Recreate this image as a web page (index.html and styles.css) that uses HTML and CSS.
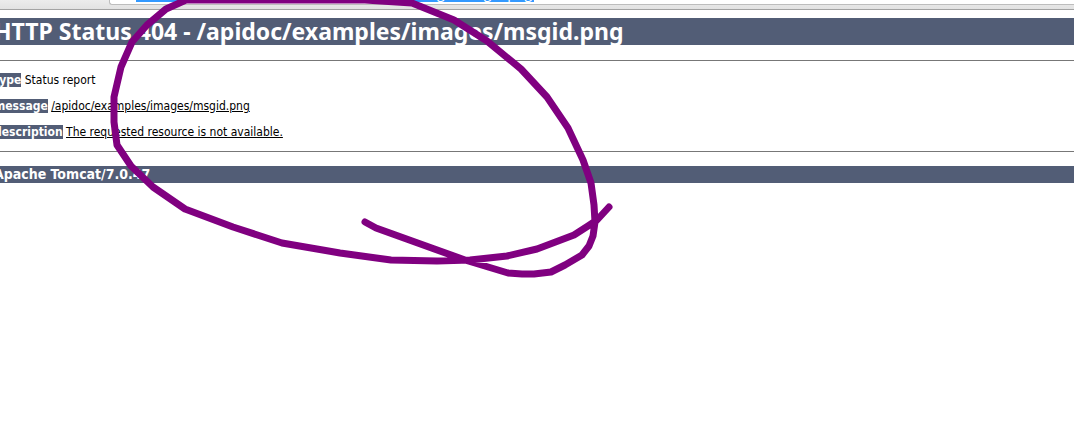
FILE: index.html
```html
<!DOCTYPE html>
<html lang="en">
<head>
<meta charset="utf-8">
<title>HTTP Status 404</title>
<link rel="stylesheet" href="styles.css">
</head>
<body>
<div class="toolbar">
  <div class="address">
    <input class="url" type="text" aria-label="Address" value="localhost:8080/apidoc/examples/images/msgid.png">
  </div>
</div>
<main class="report">
  <h1 class="title">HTTP Status 404 - /apidoc/examples/images/msgid.png</h1>
  <hr class="rule">
  <p class="row"><b class="label">type</b> Status report</p>
  <p class="row"><b class="label">message</b> <u>/apidoc/examples/images/msgid.png</u></p>
  <p class="row"><b class="label">description</b> <u>The requested resource is not available.</u></p>
  <hr class="rule">
  <h3 class="server">Apache Tomcat/7.0.47</h3>
</main>
<svg class="scribble" width="620" height="285" viewBox="0 0 620 285" aria-hidden="true">
  <path d="M365 222L376 228L465 260L508 273L522 274L534 274L551 272L565 265L582 255L589 246L593 236L595 222L594 205L591 183L583 160L568 128L547 97L521 69L487 41L454 20L412 3L365 0L186 0L166 9L147 25L132 42L121 67L114 97L114 122L117 145L131 166L153 187L185 209L233 227L282 243L340 253L391 260L437 261L470 260L507 256L537 249L574 235L588 226L597 220L609 207"/>
</svg>
</body>
</html>
```
FILE: styles.css
```css
* {
  box-sizing: border-box;
}

body {
  margin: 0;
  background: #fff;
  color: #000;
  font-family: Tahoma, "DejaVu Sans Condensed", "DejaVu Sans", sans-serif;
  overflow-x: hidden;
}

.toolbar {
  height: 10px;
  padding-left: 109px;
  background: linear-gradient(#ececec, #e2e2e2);
  border-bottom: 1px solid #a3a3a3;
}

.address {
  display: flex;
  align-items: flex-end;
  height: 5px;
  padding: 0 0 2px 26px;
  overflow: hidden;
  background: #fff;
  border: solid #bdbdbd;
  border-width: 0 0 1px 1px;
  border-radius: 0 0 0 3px;
}

.url {
  flex: none;
  width: 398px;
  height: 18px;
  padding: 0 2px;
  border: 0;
  background: #3399ff;
  color: #fff;
  font: 14px/18px "Open Sans", sans-serif;
  text-align: right;
}

.report {
  margin-top: 8px;
  margin-left: -6px;
}

.title,
.server,
.label {
  background: #525d76;
  color: #fff;
  font-weight: bold;
}

.title {
  margin: 0 0 15px;
  font-family: Tahoma, "Noto Sans", sans-serif;
  font-size: 23px;
  line-height: 27px;
  white-space: nowrap;
}

.rule {
  height: 1px;
  margin: 0;
  border: 0;
  background: #777;
}

.row {
  margin: 12px 0;
  font-size: 12px;
  line-height: 14px;
}

.server {
  margin: 14px 0 0;
  font-size: 14px;
  line-height: 17px;
}

.scribble {
  position: absolute;
  top: 0;
  left: 0;
  overflow: visible;
  pointer-events: none;
}

.scribble path {
  fill: none;
  stroke: #800080;
  stroke-width: 7px;
  stroke-linecap: round;
  stroke-linejoin: round;
}
```
